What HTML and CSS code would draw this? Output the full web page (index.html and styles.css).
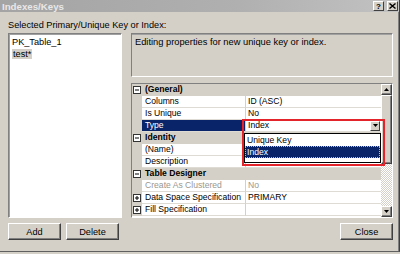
FILE: index.html
```html
<!DOCTYPE html>
<html>
<head>
    <title>Indexes/Keys</title>
    <link rel="stylesheet" href="styles.css">
</head>
<body>
    <div class="dialog">
        <div class="titlebar">
            <span class="title">Indexes/Keys</span>
            <div class="caption-btns">
                <span class="cbtn">?</span>
                <span class="cbtn">
                    <svg width="7" height="6" viewBox="0 0 7 6"><path d="M0.5 0.5l6 5M6.5 0.5l-6 5" stroke="#000" stroke-width="1.4"/></svg>
                </span>
            </div>
        </div>

        <div class="body">
            <div class="caption">Selected Primary/Unique Key or Index:</div>

            <div class="main">
                <div class="list">
                    <div class="item">PK_Table_1</div>
                    <div class="item"><span class="sel">test*</span></div>
                </div>

                <div class="right">
                    <div class="desc">Editing properties for new unique key or index.</div>

                    <div class="grid">
                        <div class="rows">
                            <div class="row cat">
                                <span class="gutter"><svg class="exp" width="8" height="8" viewBox="0 0 8 8"><rect x=".5" y=".5" width="7" height="7" fill="#fff" stroke="#333"/><path d="M2 4h4" stroke="#000"/></svg></span>
                                <span class="name">(General)</span>
                                <span class="value"></span>
                            </div>
                            <div class="row">
                                <span class="gutter"></span>
                                <span class="name">Columns</span>
                                <span class="value">ID (ASC)</span>
                            </div>
                            <div class="row">
                                <span class="gutter"></span>
                                <span class="name">Is Unique</span>
                                <span class="value">No</span>
                            </div>
                            <div class="row selected">
                                <span class="gutter"></span>
                                <span class="name">Type</span>
                                <span class="value combo">Index
                                    <span class="drop-btn"><svg width="5" height="3" viewBox="0 0 5 3"><path d="M0 0h5L2.5 3z" fill="#000"/></svg></span>
                                </span>
                            </div>
                            <div class="row cat">
                                <span class="gutter"><svg class="exp" width="8" height="8" viewBox="0 0 8 8"><rect x=".5" y=".5" width="7" height="7" fill="#fff" stroke="#333"/><path d="M2 4h4" stroke="#000"/></svg></span>
                                <span class="name">Identity</span>
                                <span class="value"></span>
                            </div>
                            <div class="row">
                                <span class="gutter"></span>
                                <span class="name">(Name)</span>
                                <span class="value"></span>
                            </div>
                            <div class="row">
                                <span class="gutter"></span>
                                <span class="name">Description</span>
                                <span class="value"></span>
                            </div>
                            <div class="row cat">
                                <span class="gutter"><svg class="exp" width="8" height="8" viewBox="0 0 8 8"><rect x=".5" y=".5" width="7" height="7" fill="#fff" stroke="#333"/><path d="M2 4h4" stroke="#000"/></svg></span>
                                <span class="name">Table Designer</span>
                                <span class="value"></span>
                            </div>
                            <div class="row disabled">
                                <span class="gutter"></span>
                                <span class="name">Create As Clustered</span>
                                <span class="value">No</span>
                            </div>
                            <div class="row">
                                <span class="gutter"><svg class="exp" width="8" height="8" viewBox="0 0 8 8"><rect x=".5" y=".5" width="7" height="7" fill="#fff" stroke="#333"/><path d="M2 4h4M4 2v4" stroke="#000"/></svg></span>
                                <span class="name">Data Space Specification</span>
                                <span class="value">PRIMARY</span>
                            </div>
                            <div class="row">
                                <span class="gutter"><svg class="exp" width="8" height="8" viewBox="0 0 8 8"><rect x=".5" y=".5" width="7" height="7" fill="#fff" stroke="#333"/><path d="M2 4h4M4 2v4" stroke="#000"/></svg></span>
                                <span class="name">Fill Specification</span>
                                <span class="value"></span>
                            </div>
                        </div>

                        <div class="scrollbar">
                            <span class="sb-btn"><svg width="5" height="3" viewBox="0 0 5 3"><path d="M0 3h5L2.5 0z" fill="#000"/></svg></span>
                            <span class="sb-thumb"></span>
                            <span class="sb-track"></span>
                            <span class="sb-btn"><svg width="5" height="3" viewBox="0 0 5 3"><path d="M0 0h5L2.5 3z" fill="#000"/></svg></span>
                        </div>

                        <!-- open dropdown of the Type property -->
                        <div class="dropdown">
                            <div class="opt">Unique Key</div>
                            <div class="opt active">Index</div>
                        </div>
                        <div class="mark"></div>
                    </div>
                </div>
            </div>

            <div class="buttons">
                <button class="btn">Add</button>
                <button class="btn">Delete</button>
                <button class="btn close">Close</button>
            </div>
        </div>
    </div>
</body>
</html>
```

FILE: styles.css
```css
html {
    background-color: #d4d0c8;
}

body {
    margin: 0;
    font-family: 'Liberation Sans', Arial, sans-serif;
    font-size: 9.2px;
    color: #000;
    background-color: #d4d0c8;
}

.dialog {
    width: 400px;
    height: 252px;
    box-sizing: border-box;
    display: flex;
    flex-direction: column;
    border-right: 1px solid #404040;
    border-bottom: 1px solid #606060;
}

.titlebar {
    height: 12px;
    display: flex;
    align-items: center;
    justify-content: space-between;
    padding-left: 2px;
    background: linear-gradient(to right, #a4a4a4, #b0b0b0 60%, #c2c2c2);
}

.title {
    color: #e8e8e8;
    font-weight: bold;
    font-size: 9.7px;
}

.caption-btns {
    display: flex;
    gap: 3px;
    margin-right: 1px;
}

.cbtn {
    width: 11px;
    height: 10px;
    box-sizing: border-box;
    display: flex;
    align-items: center;
    justify-content: center;
    background-color: #d4d0c8;
    border: 1px solid;
    border-color: #fff #404040 #404040 #fff;
    font-weight: bold;
    font-size: 8px;
}

.body {
    flex: 1;
    display: flex;
    flex-direction: column;
    padding: 8px 5px 0 8px;
    border-right: 1px solid #808080;
}

.caption {
    line-height: 11px;
    margin-bottom: 2px;
}

.main {
    height: 185px;
    display: flex;
    gap: 9px;
}

.list {
    width: 114px;
    box-sizing: border-box;
    background-color: #fff;
    border: 1px solid;
    border-color: #808080 #fff #fff #808080;
    box-shadow: inset 1px 1px 0 #a0a0a0;
    padding: 2px 0 0 3px;
}

.item {
    line-height: 12px;
}

.sel {
    background-color: #d4d0c8;
    padding: 0 1px;
}

.right {
    flex: 1;
    display: flex;
    flex-direction: column;
    gap: 6px;
}

.desc {
    height: 44px;
    box-sizing: border-box;
    border: 1px solid;
    border-color: #808080 #fff #fff #808080;
    box-shadow: inset 0 1px 0 #a0a0a0;
    padding: 3px 3px;
    line-height: 11px;
    font-size: 9.3px;
}

.grid {
    flex: 1;
    position: relative;
    display: flex;
    box-sizing: border-box;
    border: 1px solid;
    border-color: #808080 #fff #fff #808080;
    background-color: #fff;
    font-size: 8.6px;
}

.rows {
    flex: 1;
}

.row {
    display: grid;
    grid-template-columns: 10px 103px 1fr;
    height: 12px;
}

.gutter {
    background-color: #d4d0c8;
    display: flex;
    align-items: center;
}

.exp {
    margin-left: 1px;
}

.name,
.value {
    box-sizing: border-box;
    line-height: 11px;
    border-bottom: 1px solid #dedbd4;
    white-space: nowrap;
    overflow: hidden;
}

.name {
    padding-left: 3px;
}

.value {
    padding-left: 2px;
    border-left: 1px solid #d4d0c8;
}

.cat .name,
.cat .value {
    background-color: #d4d0c8;
    border-color: #d4d0c8;
    font-weight: bold;
}

.selected .name {
    background-color: #0a246a;
    color: #fff;
}

.disabled .name,
.disabled .value {
    color: #9a978f;
}

.combo {
    display: flex;
    align-items: center;
    justify-content: space-between;
    padding-right: 1px;
}

.drop-btn {
    width: 10px;
    height: 10px;
    box-sizing: border-box;
    display: flex;
    align-items: center;
    justify-content: center;
    background-color: #d4d0c8;
    border: 1px solid;
    border-color: #fff #404040 #404040 #fff;
}

.scrollbar {
    width: 11px;
    display: flex;
    flex-direction: column;
}

.sb-btn,
.sb-thumb {
    box-sizing: border-box;
    display: flex;
    align-items: center;
    justify-content: center;
    background-color: #d4d0c8;
    border: 1px solid;
    border-color: #fff #404040 #404040 #fff;
    box-shadow: inset -1px -1px 0 #808080;
}

.sb-btn {
    height: 11px;
}

.sb-thumb {
    height: 69px;
}

.sb-track {
    flex: 1;
    background-image: repeating-conic-gradient(#fff 0 25%, #d4d0c8 0 50%);
    background-size: 2px 2px;
}

.dropdown {
    position: absolute;
    left: 112px;
    top: 49px;
    width: 137px;
    height: 30px;
    box-sizing: border-box;
    background-color: #fff;
    border: 1px solid #000;
}

.opt {
    height: 12px;
    line-height: 12px;
    padding-left: 2px;
    box-sizing: border-box;
}

.opt.active {
    background-color: #0a246a;
    color: #fff;
    outline: 1px dotted #c8c080;
    outline-offset: -1px;
}

.mark {
    position: absolute;
    left: 110px;
    top: 35px;
    width: 143px;
    height: 47px;
    box-sizing: border-box;
    border: 2px solid #e3242b;
}

.buttons {
    display: flex;
    gap: 5px;
    margin-top: 5px;
}

.btn {
    width: 53px;
    height: 17px;
    padding: 0;
    font-family: inherit;
    font-size: inherit;
    color: #000;
    background-color: #d4d0c8;
    border: 1px solid;
    border-color: #fff #404040 #404040 #fff;
    box-shadow: inset -1px -1px 0 #808080;
}

.close {
    margin-left: auto;
}
```
